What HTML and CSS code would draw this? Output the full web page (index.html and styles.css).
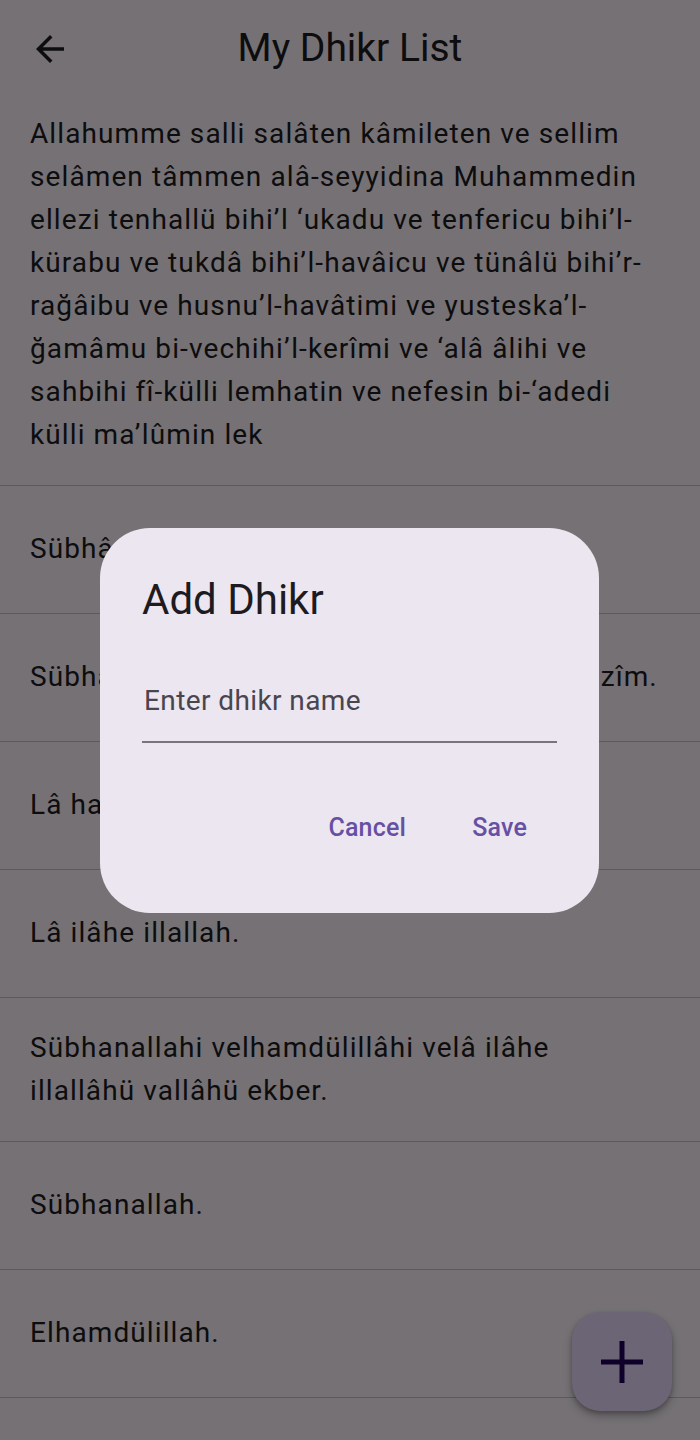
FILE: index.html
```html
<!DOCTYPE html>
<html lang="tr">
<head>
    <meta charset="UTF-8">
    <meta name="viewport" content="width=device-width, initial-scale=1.0">
    <title>My Dhikr List</title>
    <link rel="stylesheet" href="styles.css">
</head>
<body>
    <div class="screen">
        <header class="app-bar">
            <button class="back-button" aria-label="Back">
                <svg viewBox="0 0 24 24" width="42" height="42">
                    <path d="M20 11H7.83l5.59-5.59L12 4l-8 8 8 8 1.41-1.41L7.83 13H20v-2z" fill="#1d1b20"/>
                </svg>
            </button>
            <h1 class="app-title">My Dhikr List</h1>
        </header>

        <ul class="dhikr-list">
            <li class="dhikr-item first">Allahumme salli salâten kâmileten ve sellim selâmen tâmmen alâ-seyyidina Muhammedin ellezi tenhallü bihi’l ‘ukadu ve tenfericu bihi’l-kürabu ve tukdâ bihi’l-havâicu ve tünâlü bihi’r-rağâibu ve husnu’l-havâtimi ve yusteska’l-ğamâmu bi-vechihi’l-kerîmi ve ‘alâ âlihi ve sahbihi fî-külli lemhatin ve nefesin bi-‘adedi külli ma’lûmin lek</li>
            <li class="dhikr-item">Sübhânallahi ve bihamdihî.</li>
            <li class="dhikr-item">Sübhânallahi ve bihamdihî, sübhânallahil azîm.</li>
            <li class="dhikr-item">Lâ havle ve lâ kuvvete illâ billâh.</li>
            <li class="dhikr-item">Lâ ilâhe illallah.</li>
            <li class="dhikr-item double">Sübhanallahi velhamdülillâhi velâ ilâhe<br>illallâhü vallâhü ekber.</li>
            <li class="dhikr-item">Sübhanallah.</li>
            <li class="dhikr-item">Elhamdülillah.</li>
        </ul>

        <button class="fab" aria-label="Add">
            <svg viewBox="0 0 42 42" width="42" height="42">
                <path d="M18.5 0h5v18.5H42v5H23.5V42h-5V23.5H0v-5h18.5z" fill="#21005d"/>
            </svg>
        </button>

        <div class="scrim">
            <div class="dialog">
                <h2 class="dialog-title">Add Dhikr</h2>
                <div class="text-field">
                    <input type="text" placeholder="Enter dhikr name">
                </div>
                <div class="dialog-actions">
                    <button class="text-button">Cancel</button>
                    <button class="text-button">Save</button>
                </div>
            </div>
        </div>
    </div>
</body>
</html>
```

FILE: styles.css
```css
body {
    margin: 0;
    padding: 0;
    font-family: Roboto, "Noto Sans", sans-serif;
    background-color: #fef7ff;
}
.screen {
    position: relative;
    width: 700px;
    height: 1440px;
    overflow: hidden;
    background-color: #fef7ff;
    color: #1d1b20;
}
.app-bar {
    height: 98px;
    display: flex;
    align-items: center;
    justify-content: center;
    position: relative;
}
.back-button {
    position: absolute;
    left: 29px;
    top: 28px;
    width: 42px;
    height: 42px;
    padding: 0;
    border: none;
    background: none;
    display: flex;
}
.app-title {
    margin: 0;
    font-size: 39px;
    font-weight: 400;
    line-height: 50px;
    margin-top: -2px;
}
.dhikr-list {
    list-style: none;
    margin: 0;
    padding: 0;
}
.dhikr-item {
    padding: 41px 34px 43px 30px;
    font-size: 28px;
    line-height: 43px;
    letter-spacing: 1.1px;
    border-bottom: 1px solid #cac4d0;
}
.dhikr-item.first {
    padding-top: 14px;
    padding-bottom: 29px;
}
.dhikr-item.double {
    padding-top: 28px;
    padding-bottom: 29px;
}
.fab {
    position: absolute;
    left: 572px;
    top: 1312px;
    width: 100px;
    height: 99px;
    border: none;
    border-radius: 28px;
    background-color: #eaddff;
    box-shadow: 0 5px 9px rgba(0, 0, 0, 0.25), 0 2px 4px rgba(0, 0, 0, 0.2);
    display: flex;
    align-items: center;
    justify-content: center;
    padding: 0;
}
.scrim {
    position: absolute;
    inset: 0;
    background-color: rgba(0, 0, 0, 0.54);
    display: flex;
    align-items: center;
    justify-content: center;
}
.dialog {
    width: 415px;
    height: 342px;
    padding: 43px 42px 0;
    background-color: #ece6f0;
    border-radius: 50px;
    margin-left: -1px;
}
.dialog-title {
    margin: 0;
    font-size: 42px;
    font-weight: 400;
    line-height: 57px;
    color: #1d1b20;
}
.text-field {
    margin-top: 28px;
    padding: 23px 0 19px 2px;
    border-bottom: 2px solid #79747e;
}
.text-field input {
    width: 100%;
    border: none;
    outline: none;
    background: none;
    padding: 0;
    font-family: Roboto, "Noto Sans", sans-serif;
    font-size: 28px;
    line-height: 43px;
    height: 43px;
    letter-spacing: 0.4px;
    color: #1d1b20;
}
.text-field input::placeholder {
    color: #49454f;
}
.dialog-actions {
    display: flex;
    justify-content: flex-end;
    gap: 24px;
    margin-top: 49px;
    padding-right: 9px;
}
.text-button {
    height: 71px;
    padding: 0 21px;
    border: none;
    border-radius: 36px;
    background: none;
    font-family: Roboto, "Noto Sans", sans-serif;
    font-size: 25px;
    font-weight: 500;
    letter-spacing: 0.2px;
    color: #6750a4;
}
```
